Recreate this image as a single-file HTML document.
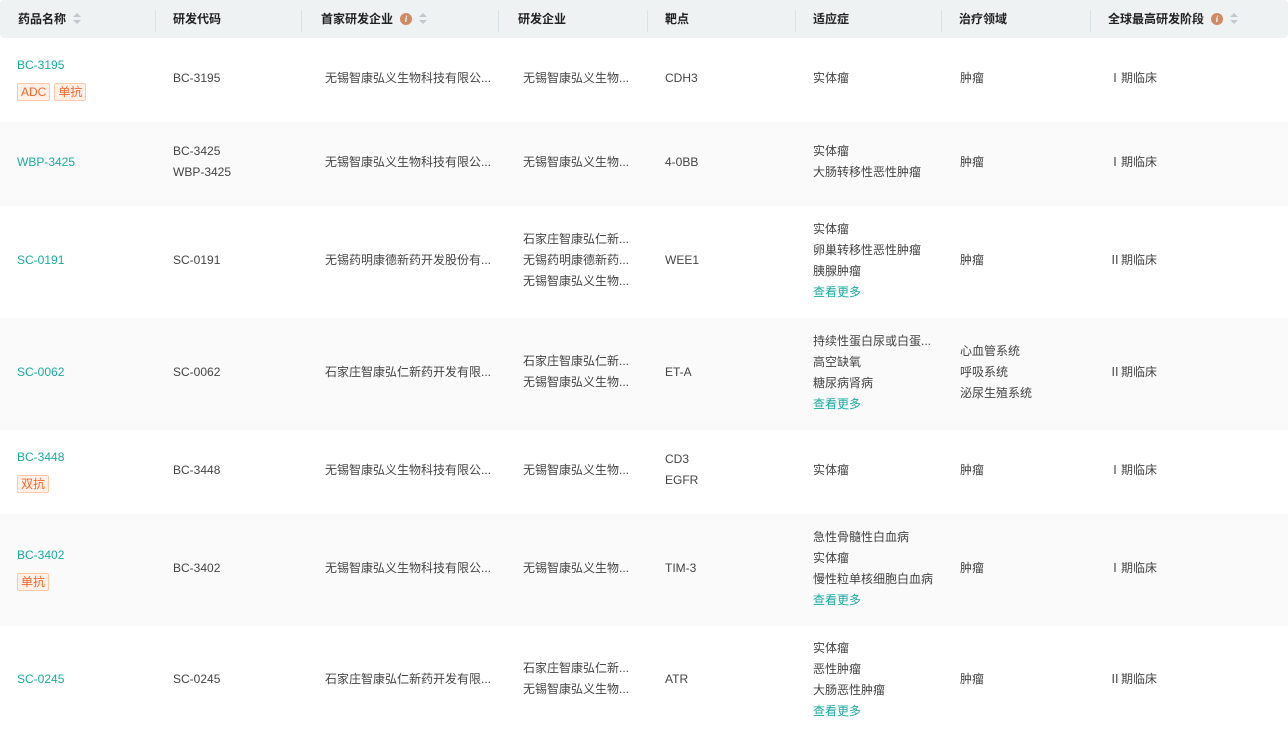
<!DOCTYPE html>
<html><head><meta charset="utf-8"><style>
*{margin:0;padding:0;box-sizing:border-box}
body{width:1288px;height:734px;overflow:hidden;background:#fff;font-family:"Liberation Sans","Noto Sans CJK SC",sans-serif;font-size:12px;color:#444}
.hd{position:absolute;left:0;top:0;width:1288px;height:38px;background:#eef2f3;border-radius:4px;font-weight:bold;color:#222}
.hd div{position:absolute;top:10px;white-space:nowrap;display:flex;align-items:center}
.sep{position:absolute;top:7px;width:1px;height:22px;background:#dbe4e4}
.sort{display:inline-block;width:8px;margin-left:7px;position:relative;height:12px}
.sort:before{content:"";position:absolute;left:0;top:0;border:4px solid transparent;border-bottom:4px solid #c3c8cc;border-top:0}
.sort:after{content:"";position:absolute;left:0;top:7px;border:4px solid transparent;border-top:4px solid #c3c8cc;border-bottom:0}
.info{display:inline-block;width:12px;height:12px;border-radius:50%;background:#cf8a64;color:#fff;font-size:9px;text-align:center;line-height:12px;margin-left:7px;font-style:italic;font-family:"Liberation Serif",serif}
.row{position:absolute;left:0;width:1288px}
.row.alt{background:#fafafa}
.c{position:absolute;top:-2px;height:100%;display:flex;flex-direction:column;justify-content:center;line-height:21px;white-space:nowrap}
.lk{color:#1aaa9e}
.tags{display:flex;gap:4px;margin-top:7px}
.tag{border:1px solid #fcc8aa;background:#fff0e8;color:#f5652a;padding:0 3px;line-height:16px;font-size:12px;border-radius:2px}
</style></head><body>
<div class="hd">
<div style="left:18px">药品名称<span class="sort"></span></div>
<div class="sep" style="left:155px"></div>
<div style="left:173px">研发代码</div>
<div class="sep" style="left:301px"></div>
<div style="left:321px">首家研发企业<span class="info">i</span><span class="sort"></span></div>
<div class="sep" style="left:498px"></div>
<div style="left:518px">研发企业</div>
<div class="sep" style="left:647px"></div>
<div style="left:665px">靶点</div>
<div class="sep" style="left:795px"></div>
<div style="left:813px">适应症</div>
<div class="sep" style="left:941px"></div>
<div style="left:959px">治疗领域</div>
<div class="sep" style="left:1090px"></div>
<div style="left:1108px">全球最高研发阶段<span class="info">i</span><span class="sort"></span></div>
</div>

<div class="row" style="top:38px;height:84px">
<div class="c" style="left:17px"><span class="lk">BC-3195</span><div class="tags"><span class="tag">ADC</span><span class="tag">单抗</span></div></div>
<div class="c" style="left:173px">BC-3195</div>
<div class="c" style="left:325px">无锡智康弘义生物科技有限公...</div>
<div class="c" style="left:523px">无锡智康弘义生物...</div>
<div class="c" style="left:665px">CDH3</div>
<div class="c" style="left:813px">实体瘤</div>
<div class="c" style="left:960px">肿瘤</div>
<div class="c" style="left:1109px">Ⅰ期临床</div>
</div>

<div class="row alt" style="top:122px;height:84px">
<div class="c" style="left:17px"><span class="lk">WBP-3425</span></div>
<div class="c" style="left:173px"><span>BC-3425</span><span>WBP-3425</span></div>
<div class="c" style="left:325px">无锡智康弘义生物科技有限公...</div>
<div class="c" style="left:523px">无锡智康弘义生物...</div>
<div class="c" style="left:665px">4-0BB</div>
<div class="c" style="left:813px"><span>实体瘤</span><span>大肠转移性恶性肿瘤</span></div>
<div class="c" style="left:960px">肿瘤</div>
<div class="c" style="left:1109px">Ⅰ期临床</div>
</div>

<div class="row" style="top:206px;height:112px">
<div class="c" style="left:17px"><span class="lk">SC-0191</span></div>
<div class="c" style="left:173px">SC-0191</div>
<div class="c" style="left:325px">无锡药明康德新药开发股份有...</div>
<div class="c" style="left:523px"><span>石家庄智康弘仁新...</span><span>无锡药明康德新药...</span><span>无锡智康弘义生物...</span></div>
<div class="c" style="left:665px">WEE1</div>
<div class="c" style="left:813px"><span>实体瘤</span><span>卵巢转移性恶性肿瘤</span><span>胰腺肿瘤</span><span class="lk" style="line-height:20px">查看更多</span></div>
<div class="c" style="left:960px">肿瘤</div>
<div class="c" style="left:1109px">Ⅱ期临床</div>
</div>

<div class="row alt" style="top:318px;height:112px">
<div class="c" style="left:17px"><span class="lk">SC-0062</span></div>
<div class="c" style="left:173px">SC-0062</div>
<div class="c" style="left:325px">石家庄智康弘仁新药开发有限...</div>
<div class="c" style="left:523px"><span>石家庄智康弘仁新...</span><span>无锡智康弘义生物...</span></div>
<div class="c" style="left:665px">ET-A</div>
<div class="c" style="left:813px"><span>持续性蛋白尿或白蛋...</span><span>高空缺氧</span><span>糖尿病肾病</span><span class="lk" style="line-height:20px">查看更多</span></div>
<div class="c" style="left:960px"><span>心血管系统</span><span>呼吸系统</span><span>泌尿生殖系统</span></div>
<div class="c" style="left:1109px">Ⅱ期临床</div>
</div>

<div class="row" style="top:430px;height:84px">
<div class="c" style="left:17px"><span class="lk">BC-3448</span><div class="tags"><span class="tag">双抗</span></div></div>
<div class="c" style="left:173px">BC-3448</div>
<div class="c" style="left:325px">无锡智康弘义生物科技有限公...</div>
<div class="c" style="left:523px">无锡智康弘义生物...</div>
<div class="c" style="left:665px"><span>CD3</span><span>EGFR</span></div>
<div class="c" style="left:813px">实体瘤</div>
<div class="c" style="left:960px">肿瘤</div>
<div class="c" style="left:1109px">Ⅰ期临床</div>
</div>

<div class="row alt" style="top:514px;height:112px">
<div class="c" style="left:17px"><span class="lk">BC-3402</span><div class="tags"><span class="tag">单抗</span></div></div>
<div class="c" style="left:173px">BC-3402</div>
<div class="c" style="left:325px">无锡智康弘义生物科技有限公...</div>
<div class="c" style="left:523px">无锡智康弘义生物...</div>
<div class="c" style="left:665px">TIM-3</div>
<div class="c" style="left:813px"><span>急性骨髓性白血病</span><span>实体瘤</span><span>慢性粒单核细胞白血病</span><span class="lk" style="line-height:20px">查看更多</span></div>
<div class="c" style="left:960px">肿瘤</div>
<div class="c" style="left:1109px">Ⅰ期临床</div>
</div>

<div class="row" style="top:626px;height:110px">
<div class="c" style="left:17px"><span class="lk">SC-0245</span></div>
<div class="c" style="left:173px">SC-0245</div>
<div class="c" style="left:325px">石家庄智康弘仁新药开发有限...</div>
<div class="c" style="left:523px"><span>石家庄智康弘仁新...</span><span>无锡智康弘义生物...</span></div>
<div class="c" style="left:665px">ATR</div>
<div class="c" style="left:813px"><span>实体瘤</span><span>恶性肿瘤</span><span>大肠恶性肿瘤</span><span class="lk" style="line-height:20px">查看更多</span></div>
<div class="c" style="left:960px">肿瘤</div>
<div class="c" style="left:1109px">Ⅱ期临床</div>
</div>
</body></html>
